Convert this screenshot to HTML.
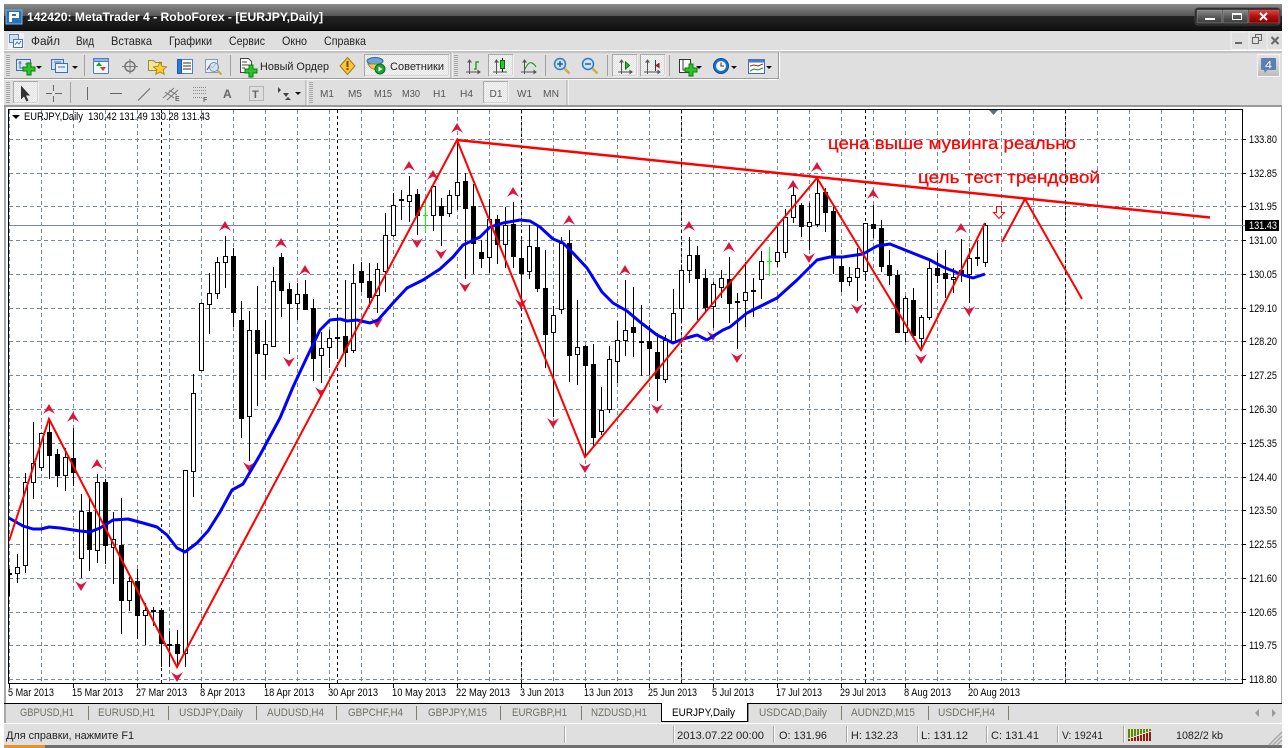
<!DOCTYPE html>
<html><head><meta charset="utf-8"><title>MetaTrader 4</title>
<style>html,body{margin:0;padding:0;background:#fff;overflow:hidden}svg{display:block}text{font-family:"Liberation Sans","Noto Sans CJK SC",sans-serif;white-space:pre}</style></head>
<body>
<svg xmlns="http://www.w3.org/2000/svg" width="1288" height="748" viewBox="0 0 1288 748" font-size="11">
<defs>
<linearGradient id="tb1" x1="0" y1="0" x2="0" y2="1"><stop offset="0" stop-color="#8c8c8c"/><stop offset="1" stop-color="#555"/></linearGradient>
<linearGradient id="tb2" x1="0" y1="0" x2="0" y2="1"><stop offset="0" stop-color="#242424"/><stop offset="1" stop-color="#111"/></linearGradient>
<linearGradient id="wb" x1="0" y1="0" x2="0" y2="1"><stop offset="0" stop-color="#8a8a8a"/><stop offset=".5" stop-color="#5c5c5c"/><stop offset="1" stop-color="#3a3a3a"/></linearGradient>
<linearGradient id="wr" x1="0" y1="0" x2="0" y2="1"><stop offset="0" stop-color="#d84a40"/><stop offset=".5" stop-color="#b01010"/><stop offset="1" stop-color="#800000"/></linearGradient>
<linearGradient id="b4" x1="0" y1="0" x2="0" y2="1"><stop offset="0" stop-color="#e4e4e4"/><stop offset="1" stop-color="#bdbdbd"/></linearGradient>
<pattern id="vg" x="9" y="110" width="32" height="7" patternUnits="userSpaceOnUse"><rect width="1" height="4" fill="#778899"/></pattern>
<pattern id="press" width="2" height="2" patternUnits="userSpaceOnUse"><rect width="2" height="2" fill="#e4e4e4"/><rect width="1" height="1" fill="#f4f4f4"/><rect x="1" y="1" width="1" height="1" fill="#f4f4f4"/></pattern>
<path id="u" d="M0-6L6 4 3 2 0 .5-3 2-6 4Z" fill="#dc143c"/>
<path id="d" d="M0 6L6-4 3-2 0-.5-3-2-6-4Z" fill="#dc143c"/>
<path id="plus" d="M-2-6h4v4h4v4h-4v4h-4v-4h-4v-4h4z" fill="#2cc42c" stroke="#0c7a0c" stroke-width="1"/>
<path id="ar" d="M0 0h6l-3 3z" fill="#111"/>
</defs>

<!-- window base -->
<rect x="4" y="4" width="1278" height="744" fill="#dfdfdf"/>
<rect x="4" y="4" width="1278" height="12" fill="url(#tb1)"/>
<rect x="4" y="16" width="1278" height="14" fill="url(#tb2)"/>
<rect x="4" y="30" width="1278" height="1" fill="#000"/>
<rect x="4" y="50" width="1278" height="1" fill="#fff"/>
<rect x="4" y="51.5" width="1278" height="1" fill="#a4a4a4"/>
<rect x="4" y="78" width="775" height="1" fill="#9a9a9a"/>
<rect x="4" y="79" width="775" height="1" fill="#fff"/>
<rect x="778" y="52" width="1" height="27" fill="#9a9a9a"/><rect x="779" y="52" width="1" height="27" fill="#fff"/>
<rect x="4" y="105" width="1278" height="2" fill="#9a9a9a"/>
<rect x="6" y="107" width="1276" height="596" fill="#fff"/>
<rect x="4" y="107" width="2" height="616" fill="#a8a8a8"/>
<rect x="1281" y="107" width="1" height="596" fill="#a8a8a8"/>
<rect x="4" y="703" width="1278" height="1" fill="#000"/>
<rect x="4" y="723" width="1278" height="1" fill="#fff"/>
<rect x="4" y="745" width="1278" height="3" fill="#6f6f6f"/>
<rect x="4" y="745" width="41" height="3" fill="#e8912a"/>

<!-- title -->
<rect x="6" y="10" width="16" height="14" fill="#2b73b8" stroke="#7fb4e0"/>
<path d="M9 12h10v6h-7v4h-3zM12 14v2h4v-2z" fill="#fff" fill-rule="evenodd"/>
<text x="27" y="21" font-size="12" font-weight="bold" fill="#fff" textLength="296" lengthAdjust="spacingAndGlyphs">142420: MetaTrader 4 - RoboForex - [EURJPY,Daily]</text>
<rect x="1195" y="8" width="85" height="17" rx="3" fill="#1a1a1a" stroke="#444"/>
<rect x="1197" y="10" width="25" height="13" fill="url(#wb)" stroke="#999" stroke-width=".6"/>
<rect x="1223" y="10" width="25" height="13" fill="url(#wb)" stroke="#999" stroke-width=".6"/>
<rect x="1249" y="10" width="30" height="13" fill="url(#wr)" stroke="#c66" stroke-width=".6"/>
<rect x="1205" y="18" width="10" height="2" fill="#fff"/>
<rect x="1232.5" y="13.5" width="9" height="6" fill="none" stroke="#fff"/><rect x="1232" y="13" width="10" height="2" fill="#fff"/>
<path d="M1260 13l7 7m0-7l-7 7" stroke="#fff" stroke-width="2"/>

<!-- menu -->
<rect x="8" y="33" width="16" height="16" fill="#eef3fb"/>
<rect x="9.5" y="34.5" width="9" height="8" fill="#cfe0f5" stroke="#5f86c4"/>
<rect x="13.5" y="39.5" width="9" height="8" fill="#f5f8fd" stroke="#4a76bc"/>
<path d="M15 45l2-3 2 2 2-3" fill="none" stroke="#4a76bc"/>
<g fill="#222" font-size="12">
<text x="31" y="45" textLength="29" lengthAdjust="spacingAndGlyphs">Файл</text>
<text x="76" y="45" textLength="18" lengthAdjust="spacingAndGlyphs">Вид</text>
<text x="111" y="45" textLength="41" lengthAdjust="spacingAndGlyphs">Вставка</text>
<text x="169" y="45" textLength="43" lengthAdjust="spacingAndGlyphs">Графики</text>
<text x="229" y="45" textLength="36" lengthAdjust="spacingAndGlyphs">Сервис</text>
<text x="282" y="45" textLength="25" lengthAdjust="spacingAndGlyphs">Окно</text>
<text x="324" y="45" textLength="42" lengthAdjust="spacingAndGlyphs">Справка</text>
</g>
<!-- mdi buttons -->
<path d="M1231 49V32h16M1249 49V32h16M1267 49V32h15" fill="none" stroke="#f2f2f2"/>
<path d="M1231 49.5h16M1249 49.5h16M1267 49.5h15" stroke="#f2f2f2"/>
<rect x="1235" y="42" width="7" height="2" fill="#666"/>
<path d="M1252.5 37.5h6v6h-6zM1255.5 37v-2.5h6v6h-3" fill="none" stroke="#666"/>
<path d="M1271.5 37l7 7m0-7l-7 7" stroke="#666" stroke-width="2"/>

<!-- toolbar 1 -->
<path d="M8 55V76M8 82V103M311 82V103M456 55V76" stroke="#a8a8a8" stroke-width="4" stroke-dasharray="1 1"/>
<path d="M84.5 55V76M230.5 55V76M545.5 55V76M607.5 55V76M669.5 55V76M70.5 82V103" stroke="#a0a0a0"/>
<path d="M451 52V78M306 80V105M567 80V105" stroke="#a0a0a0"/>
<path d="M452 52V78M307 80V105M568 80V105" stroke="#fff"/>
<!-- new chart -->
<rect x="16.5" y="59.5" width="14" height="11" fill="#d8e6f8" stroke="#3f6fb0"/>
<path d="M20 61v7h8M18.5 63h3M25 64h3" stroke="#3f6fb0" fill="none"/>
<use href="#plus" x="29" y="69"/>
<use href="#ar" x="36" y="66"/>
<!-- profiles -->
<rect x="51.5" y="59.5" width="12" height="10" fill="#cfe0f5" stroke="#3f6fb0"/>
<rect x="55.5" y="63.5" width="12" height="9" fill="#e7f0fb" stroke="#3f6fb0"/>
<path d="M54 62h7M58 67h7" stroke="#3f6fb0"/>
<use href="#ar" x="72" y="66"/>
<!-- market watch -->
<rect x="93.5" y="58.5" width="15" height="15" rx="1" fill="#f4f8ff" stroke="#4f7dbf"/><rect x="93.5" y="58.5" width="15" height="3" fill="#8fb4e4" stroke="#4f7dbf"/>
<path d="M99 62l3 4h-6z" fill="#1ea51e"/><path d="M103 71l-3-4h6z" fill="#d8402a"/>
<!-- crosshair -->
<circle cx="130" cy="66.5" r="5" fill="none" stroke="#777" stroke-width="1.5"/><path d="M130 59v15M122 66.5h16" stroke="#777"/>
<!-- folder star -->
<path d="M148.5 60.5h5l2 2h6v8h-13z" fill="#f5e69a" stroke="#9a8a3a"/>
<path d="M160 62l2 4.2 4.5.6-3.300 3 .9 4.500-4.100-2.300-4.100 2.300.9-4.500-3.300-3 4.500-.6z" fill="#f6cf3a" stroke="#b18a10"/>
<!-- navigator -->
<rect x="177.5" y="59.5" width="15" height="14" fill="#fff" stroke="#4f7dbf"/><rect x="177.5" y="59.5" width="4" height="14" fill="#2d79d6" stroke="#1f5aa8"/>
<path d="M183 63h8M183 66h8M183 69h8" stroke="#333"/>
<!-- magnifier -->
<rect x="205.5" y="59.5" width="12" height="13" fill="#eaf0f8" stroke="#8a98a8"/>
<path d="M207 70l3-5 3 3 3-5" stroke="#557" fill="none"/>
<circle cx="214" cy="67" r="4.5" fill="#cfe3f8" fill-opacity=".7" stroke="#6f8fb0"/><path d="M217.5 70.5l4 4" stroke="#c9a93a" stroke-width="2"/>
<!-- new order -->
<path d="M240.5 58.5h8l3 3v11h-11z" fill="#fff" stroke="#444"/>
<path d="M242 62h5M242 65h7M242 68h3" stroke="#444"/>
<use href="#plus" x="251" y="71"/>
<text x="260" y="70" fill="#222" textLength="69" lengthAdjust="spacingAndGlyphs">Новый Ордер</text>
<!-- warning -->
<path d="M347.5 57.5l7.5 8.500-7.5 8.500-7.5-8.500z" fill="#f7c73a" stroke="#a07a10"/><rect x="346.5" y="61" width="2" height="6" fill="#7a4a00"/><rect x="346.5" y="68" width="2" height="2" fill="#7a4a00"/>
<!-- experts -->
<rect x="364.5" y="54.5" width="84" height="21" fill="url(#press)" stroke="#a8a8a8"/>
<path d="M449 55v21H365" fill="none" stroke="#fff"/>
<ellipse cx="375" cy="61" rx="8" ry="3.5" fill="#6ba4d8" stroke="#2e689e"/>
<path d="M368 64c3 6 10 7 13 4v-4z" fill="#f0c95a" stroke="#a88420"/>
<circle cx="380" cy="69" r="5" fill="#1fa331" stroke="#0c6a18"/><path d="M378.5 66.5v5l4-2.500z" fill="#fff"/>
<text x="390" y="70" fill="#222" textLength="54" lengthAdjust="spacingAndGlyphs">Советники</text>
<!-- chart type -->
<path d="M469.5 60v14M466 72h14M469.5 60l-1.500 2h3zM480 72l-2-1.500v3z" stroke="#555" fill="none"/>
<path d="M474 69h2v-7h3" stroke="#189018" fill="none" stroke-width="1.3"/>
<rect x="488.5" y="54.5" width="24" height="21" fill="url(#press)" stroke="#a8a8a8"/>
<path d="M513 55v21H489" fill="none" stroke="#fff"/>
<path d="M496.5 60v14M493 72h14M496.5 60l-1.500 2h3z" stroke="#555" fill="none"/>
<path d="M502.5 58v14" stroke="#111"/><rect x="500.5" y="60.5" width="4" height="8" fill="#22d022" stroke="#0a6a0a"/>
<path d="M524.5 60v14M521 72h15M524.5 60l-1.500 2h3zM536 72l-2-1.500v3z" stroke="#555" fill="none"/>
<path d="M525 69c3-6 5-7 7-6s3 2 4 4" stroke="#189018" fill="none"/>
<!-- zoom -->
<circle cx="560" cy="64" r="5.5" fill="#cfe3f8" stroke="#2f78c0" stroke-width="1.5"/><path d="M557 64h6M560 61v6" stroke="#1c5ea8" stroke-width="1.5"/><path d="M564.5 68.5l5 5" stroke="#d2ae3c" stroke-width="2.5"/>
<circle cx="588" cy="64" r="5.5" fill="#cfe3f8" stroke="#2f78c0" stroke-width="1.5"/><path d="M585 64h6" stroke="#1c5ea8" stroke-width="1.5"/><path d="M592.5 68.5l5 5" stroke="#d2ae3c" stroke-width="2.5"/>
<!-- autoscroll / shift -->
<rect x="612.5" y="54.5" width="24" height="21" fill="url(#press)" stroke="#a8a8a8"/>
<path d="M637 55v21H613" fill="none" stroke="#fff"/>
<path d="M621.5 60v14M618 72h14M621.5 60l-1.500 2h3zM632 72l-2-1.500v3z" stroke="#555" fill="none"/><path d="M625.5 62v7l4-3.500z" fill="#22c022" stroke="#0a7a0a"/>
<rect x="640.5" y="54.5" width="24" height="21" fill="url(#press)" stroke="#a8a8a8"/>
<path d="M665 55v21H641" fill="none" stroke="#fff"/>
<path d="M647.5 60v14M644 72h16M647.5 60l-1.500 2h3zM660 72l-2-1.500v3z" stroke="#555" fill="none"/><path d="M655.5 60v11" stroke="#1a3a9a"/><path d="M659 63.5v4l-3-2z" fill="#c8301a" stroke="#8a1a0a"/>
<!-- indicators -->
<rect x="679.5" y="59.5" width="11" height="13" fill="#fff" stroke="#333"/><path d="M683 60v10h7" stroke="#333" fill="none"/>
<use href="#plus" x="691" y="70"/>
<use href="#ar" x="696" y="66"/>
<circle cx="721" cy="66" r="7.5" fill="#1a70c8" stroke="#0c4a8e"/><circle cx="721" cy="66" r="5" fill="#eef4fb"/><path d="M721 62.5V66h3" stroke="#333" fill="none"/>
<use href="#ar" x="731" y="66"/>
<rect x="748.5" y="59.5" width="16" height="14" fill="#fff" stroke="#3f6fb0"/><rect x="748.5" y="59.5" width="16" height="3" fill="#3f7ec8"/>
<path d="M750 66l4-1 4 1 5-2" stroke="#a02a10" fill="none"/><path d="M750 71l4-2 4 1 5-2" stroke="#189018" fill="none"/>
<use href="#ar" x="766" y="66"/>
<!-- 4 -->
<rect x="1257.5" y="54.5" width="22" height="22" fill="url(#b4)" stroke="#f4f4f4"/>
<path d="M1262 58h13a1 1 0 0 1 1 1v10a1 1 0 0 1-1 1h-8l-2 3-1-3h-2a1 1 0 0 1-1-1V59a1 1 0 0 1 1-1z" fill="#5b7fb5"/>
<text x="1265" y="68.5" font-size="11" fill="#fff" textLength="7" lengthAdjust="spacingAndGlyphs">4</text>

<!-- toolbar 2 -->
<rect x="13.5" y="81.5" width="24" height="21" fill="url(#press)" stroke="#a8a8a8"/>
<path d="M38 82v21H14" fill="none" stroke="#fff"/>
<path d="M21 85.5v14l3-3 2.500 5 2-1-2.500-5h4z" fill="#333"/>
<path d="M53.5 85v6M53.5 96v6M46 93.5h6M55 93.5h7" stroke="#666"/>
<path d="M87.5 87v13M110 93.5h12M138 100.5l12-12" stroke="#666" fill="none"/>
<path d="M163 98l11-10M167 100l11-10M165 92l9 6M169 90l8 5" stroke="#777" fill="none"/>
<text x="175" y="101" font-size="7" font-weight="bold" fill="#666">E</text>
<path d="M193 87.5h13M193 90.5h13M193 93.5h13M193 97.5h10" stroke="#888" stroke-dasharray="1 1"/>
<text x="203" y="102" font-size="7" font-weight="bold" fill="#666">F</text>
<text x="223" y="98" font-size="12" font-weight="bold" fill="#666">A</text>
<rect x="249.5" y="86.5" width="14" height="14" fill="none" stroke="#888" stroke-dasharray="1 1"/>
<text x="252" y="98" font-size="11" font-weight="bold" fill="#666">T</text>
<path d="M278 87l3 3-3 3zM283 93h6l-3 4zM288 97l3 3h-6z" fill="#444"/>
<use href="#ar" x="295" y="92"/>
<g fill="#555" font-size="10">
<text x="320" y="97" textLength="14" lengthAdjust="spacingAndGlyphs">M1</text>
<text x="348" y="97" textLength="14" lengthAdjust="spacingAndGlyphs">M5</text>
<text x="374" y="97" textLength="18" lengthAdjust="spacingAndGlyphs">M15</text>
<text x="402" y="97" textLength="18" lengthAdjust="spacingAndGlyphs">M30</text>
<text x="433" y="97" textLength="13" lengthAdjust="spacingAndGlyphs">H1</text>
<text x="460" y="97" textLength="13" lengthAdjust="spacingAndGlyphs">H4</text>
</g>
<rect x="483.5" y="81.5" width="24" height="21" fill="url(#press)" stroke="#a8a8a8"/>
<path d="M508 82v21H484" fill="none" stroke="#fff"/>
<g fill="#555" font-size="10">
<text x="489.5" y="97" textLength="13" lengthAdjust="spacingAndGlyphs">D1</text>
<text x="517" y="97" textLength="15" lengthAdjust="spacingAndGlyphs">W1</text>
<text x="543" y="97" textLength="16" lengthAdjust="spacingAndGlyphs">MN</text>
</g>

<!-- chart grid -->
<rect x="9" y="110" width="1233" height="573" fill="url(#vg)"/>
<path d="M9 139.5H1242M9 173.5H1242M9 206.5H1242M9 240.5H1242M9 274.5H1242M9 308.5H1242M9 341.5H1242M9 375.5H1242M9 409.5H1242M9 443.5H1242M9 477.5H1242M9 510.5H1242M9 544.5H1242M9 578.5H1242M9 612.5H1242M9 645.5H1242M9 679.5H1242" stroke="#778899" stroke-dasharray="4 3"/>
<path d="M161.5 110V683M337.5 110V683M521.5 110V683M681.5 110V683M865.5 110V683M1065.5 110V683" stroke="#000" stroke-dasharray="3 3"/>
<path d="M8 225.5H1242" stroke="#778899"/>

<!-- candle wicks -->
<path stroke="#000" fill="none" d="M9.5 569V596M17.5 554V583M25.5 473V573M33.5 422V499M41.5 433V471M49.5 419V479M57.5 449V487M65.5 448V491M73.5 428V486M81.5 494V578M89.5 497V571M97.5 474V563M105.5 479V564M113.5 512V584M121.5 498V634M129.5 577V611M137.5 569V639M145.5 603V645M153.5 607V626M161.5 610V667M169.5 631V667M177.5 630V667M185.5 470V667M193.5 374V497M201.5 303V370M209.5 273V334M217.5 257V299M225.5 236V288M233.5 248V327M241.5 301V438M249.5 311V461M257.5 286V406M265.5 320V380M273.5 267V347M281.5 253V317M289.5 283V354M297.5 283V320M305.5 280V309M313.5 299V381M321.5 332V383M329.5 330V368M337.5 317V357M345.5 280V367M353.5 264V353M361.5 262V292M369.5 263V307M377.5 263V313M385.5 213V292M393.5 193V237M401.5 190V220M409.5 176V222M417.5 189V235M433.5 186V231M441.5 198V246M449.5 190V217M457.5 140V210M465.5 173V279M473.5 184V274M481.5 240V268M489.5 199V273M497.5 215V264M505.5 207V268M513.5 202V268M521.5 240V307M529.5 225V279M537.5 227V292M545.5 250V368M553.5 306V417M561.5 237V314M569.5 230V382M577.5 300V385M585.5 345V457M593.5 344V448M601.5 387V435M609.5 346V413M617.5 321V383M625.5 280V356M633.5 287V357M641.5 305V376M649.5 325V375M657.5 333V401M665.5 335V383M673.5 289V343M681.5 265V320M689.5 237V283M697.5 246V320M705.5 269V313M713.5 282V328M721.5 270V298M729.5 257V323M737.5 293V349M745.5 262V327M753.5 278V317M761.5 251V299M777.5 227V267M785.5 209V258M793.5 185V223M801.5 203V237M809.5 203V250M817.5 180V227M825.5 188V232M833.5 207V274M841.5 257V292M849.5 267V286M857.5 248V301M865.5 223V280M873.5 205V238M881.5 220V272M889.5 250V285M897.5 270V332M905.5 296V342M913.5 288V337M921.5 315V348M929.5 260V320M937.5 253V283M945.5 250V298M953.5 268V293M961.5 239V282M969.5 248V303M977.5 241V266M985.5 223V267"/>
<path stroke="#00ff00" fill="none" d="M425.5 203V232M423 215.5h5M769.5 247V276M767 261.5h5"/>
<!-- white bodies -->
<path fill="#fff" stroke="#000" d="M15.5 567.5h4v6h-4zM23.5 482.5h4v83h-4zM31.5 463.5h4v19h-4zM39.5 433.5h4v34h-4zM63.5 457.5h4v18h-4zM79.5 511.5h4v47h-4zM95.5 482.5h4v68h-4zM111.5 539.5h4v8h-4zM127.5 581.5h4v19h-4zM143.5 610.5h4v5h-4zM183.5 470.5h4v183h-4zM191.5 393.5h4v78h-4zM199.5 303.5h4v67h-4zM207.5 293.5h4v11h-4zM215.5 262.5h4v31h-4zM223.5 256.5h4v6h-4zM247.5 330.5h4v86h-4zM263.5 344.5h4v10h-4zM271.5 281.5h4v65h-4zM295.5 294.5h4v9h-4zM319.5 348.5h4v7h-4zM327.5 338.5h4v9h-4zM351.5 283.5h4v67h-4zM375.5 269.5h4v26h-4zM383.5 235.5h4v36h-4zM391.5 205.5h4v30h-4zM407.5 195.5h4v6h-4zM431.5 186.5h4v29h-4zM447.5 195.5h4v18h-4zM455.5 182.5h4v13h-4zM487.5 219.5h4v38h-4zM503.5 225.5h4v19h-4zM527.5 246.5h4v25h-4zM551.5 315.5h4v17h-4zM559.5 243.5h4v66h-4zM575.5 347.5h4v7h-4zM599.5 410.5h4v21h-4zM607.5 359.5h4v50h-4zM615.5 340.5h4v21h-4zM623.5 330.5h4v10h-4zM663.5 340.5h4v39h-4zM671.5 313.5h4v28h-4zM679.5 270.5h4v38h-4zM687.5 255.5h4v15h-4zM711.5 284.5h4v22h-4zM719.5 278.5h4v9h-4zM743.5 292.5h4v8h-4zM759.5 261.5h4v18h-4zM775.5 252.5h4v9h-4zM783.5 217.5h4v35h-4zM791.5 195.5h4v22h-4zM807.5 222.5h4v4h-4zM815.5 193.5h4v31h-4zM847.5 277.5h4v4h-4zM855.5 268.5h4v9h-4zM863.5 223.5h4v48h-4zM903.5 298.5h4v34h-4zM919.5 317.5h4v21h-4zM927.5 268.5h4v49h-4zM951.5 277.5h4v2h-4zM967.5 258.5h4v16h-4zM983.5 225.5h4v37h-4z"/>
<!-- black bodies -->
<path fill="#000" stroke="#000" d="M9.5 573.5h2v1h-2zM47.5 432.5h4v23h-4zM55.5 454.5h4v21h-4zM71.5 458.5h4v14h-4zM87.5 512.5h4v37h-4zM103.5 482.5h4v63h-4zM119.5 545.5h4v55h-4zM135.5 581.5h4v34h-4zM151.5 610.5h4v1h-4zM159.5 610.5h4v33h-4zM167.5 644.5h4v1h-4zM175.5 644.5h4v9h-4zM231.5 256.5h4v56h-4zM239.5 320.5h4v98h-4zM255.5 330.5h4v23h-4zM279.5 257.5h4v33h-4zM287.5 289.5h4v14h-4zM303.5 294.5h4v15h-4zM311.5 308.5h4v50h-4zM335.5 337.5h4v1h-4zM343.5 336.5h4v16h-4zM359.5 271.5h4v11h-4zM367.5 281.5h4v16h-4zM399.5 199.5h4v1h-4zM415.5 194.5h4v21h-4zM439.5 206.5h4v9h-4zM463.5 181.5h4v27h-4zM471.5 206.5h4v37h-4zM479.5 252.5h4v6h-4zM495.5 219.5h4v25h-4zM511.5 224.5h4v32h-4zM519.5 258.5h4v15h-4zM535.5 247.5h4v41h-4zM543.5 288.5h4v46h-4zM567.5 243.5h4v112h-4zM583.5 346.5h4v19h-4zM591.5 364.5h4v73h-4zM631.5 327.5h4v5h-4zM639.5 341.5h4v1h-4zM647.5 341.5h4v7h-4zM655.5 352.5h4v26h-4zM695.5 255.5h4v23h-4zM703.5 278.5h4v29h-4zM727.5 279.5h4v24h-4zM735.5 301.5h4v1h-4zM751.5 290.5h4v1h-4zM799.5 205.5h4v21h-4zM823.5 192.5h4v20h-4zM831.5 211.5h4v45h-4zM839.5 266.5h4v15h-4zM871.5 224.5h4v4h-4zM879.5 228.5h4v38h-4zM887.5 265.5h4v10h-4zM895.5 275.5h4v57h-4zM911.5 300.5h4v35h-4zM935.5 268.5h4v7h-4zM943.5 273.5h4v5h-4zM959.5 270.5h4v4h-4zM975.5 257.5h4v1h-4z"/>

<!-- fractals -->
<use href="#u" x="49" y="410"/><use href="#u" x="73" y="418"/><use href="#u" x="97" y="465"/><use href="#u" x="225" y="227"/><use href="#u" x="281" y="244"/><use href="#u" x="305" y="271"/><use href="#u" x="409" y="167"/><use href="#u" x="433" y="176"/><use href="#u" x="457" y="129"/><use href="#u" x="513" y="193"/><use href="#u" x="569" y="221"/><use href="#u" x="625" y="271"/><use href="#u" x="689" y="227"/><use href="#u" x="729" y="248"/><use href="#u" x="793" y="186"/><use href="#u" x="817" y="168"/><use href="#u" x="873" y="195"/><use href="#u" x="961" y="229"/>
<use href="#d" x="81" y="585"/><use href="#d" x="177" y="676"/><use href="#d" x="249" y="466"/><use href="#d" x="289" y="361"/><use href="#d" x="321" y="391"/><use href="#d" x="377" y="322"/><use href="#d" x="417" y="242"/><use href="#d" x="441" y="253"/><use href="#d" x="465" y="286"/><use href="#d" x="521" y="303"/><use href="#d" x="553" y="422"/><use href="#d" x="585" y="467"/><use href="#d" x="657" y="408"/><use href="#d" x="713" y="335"/><use href="#d" x="737" y="357"/><use href="#d" x="809" y="257"/><use href="#d" x="857" y="308"/><use href="#d" x="921" y="358"/><use href="#d" x="969" y="310"/>

<!-- MA -->
<polyline fill="none" stroke="#0000ff" stroke-width="3" stroke-linejoin="round" points="9,518 23,526 33,529 41,529 49,527 60,528 80,531 90,532 100,528 113,520 128,519 143,523 157,527 167,535 177,548 185,552 197,543 208,531 220,512 232,490 243,484 260,455 280,418 293,387 307,357 320,330 330,320 340,319 347,321 357,320 370,323 378,320 393,303 407,288 423,280 440,269 453,257 463,245 480,237 490,227 503,223 520,220 530,221 540,227 553,239 563,243 573,253 587,268 602,292 613,303 627,311 640,322 657,335 673,343 683,339 697,335 707,340 723,330 730,327 747,313 763,305 777,298 797,280 817,260 830,257 843,257 863,254 877,246 890,244 910,252 930,260 943,267 963,275 973,278 985,274"/>
<!-- zigzag & lines -->
<polyline fill="none" stroke="#ff0000" stroke-width="2" stroke-linejoin="miter" points="9,541 49,419 177,667 457,140 585,457 817,178 921,350 985,223"/>
<path d="M457 140L1210 217.5" stroke="#ff0000" stroke-width="2.5" fill="none"/>
<polyline fill="none" stroke="#ff0000" stroke-width="2" points="1002,242 1025,199 1082,299"/>
<path d="M996.5 206.5h5v6h3l-5.500 6-5.500-6h3z" fill="#fff" stroke="#ff0000"/>
<text x="828" y="149" font-size="17" fill="#ff0000" stroke="#ff0000" stroke-width=".25" textLength="248" lengthAdjust="spacingAndGlyphs">цена выше мувинга реально</text>
<text x="918" y="183" font-size="17" fill="#ff0000" stroke="#ff0000" stroke-width=".25" textLength="182" lengthAdjust="spacingAndGlyphs">цель тест трендовой</text>

<!-- frame -->
<path d="M8.5 109.5H1242.5V683.5H8.5Z" fill="none" stroke="#000"/>
<path d="M989 110h9l-4.500 5z" fill="#5f6f80"/>
<path d="M12 115h8l-4 4z" fill="#000"/>
<text x="24" y="120" font-size="11" fill="#000" textLength="186" lengthAdjust="spacingAndGlyphs">EURJPY,Daily  130.42 131.49 130.28 131.43</text>

<!-- price axis -->
<path stroke="#000" d="M1242 139.5h4M1242 173.5h4M1242 206.5h4M1242 240.5h4M1242 274.5h4M1242 308.5h4M1242 341.5h4M1242 375.5h4M1242 409.5h4M1242 443.5h4M1242 477.5h4M1242 510.5h4M1242 544.5h4M1242 578.5h4M1242 612.5h4M1242 645.5h4M1242 679.5h4"/>
<g fill="#000" font-size="11">
<text x="1249" y="143" textLength="28" lengthAdjust="spacingAndGlyphs">133.80</text>
<text x="1249" y="177" textLength="28" lengthAdjust="spacingAndGlyphs">132.85</text>
<text x="1249" y="210" textLength="28" lengthAdjust="spacingAndGlyphs">131.95</text>
<text x="1249" y="244" textLength="28" lengthAdjust="spacingAndGlyphs">131.00</text>
<text x="1249" y="278" textLength="28" lengthAdjust="spacingAndGlyphs">130.05</text>
<text x="1249" y="312" textLength="28" lengthAdjust="spacingAndGlyphs">129.10</text>
<text x="1249" y="345" textLength="28" lengthAdjust="spacingAndGlyphs">128.20</text>
<text x="1249" y="379" textLength="28" lengthAdjust="spacingAndGlyphs">127.25</text>
<text x="1249" y="413" textLength="28" lengthAdjust="spacingAndGlyphs">126.30</text>
<text x="1249" y="447" textLength="28" lengthAdjust="spacingAndGlyphs">125.35</text>
<text x="1249" y="481" textLength="28" lengthAdjust="spacingAndGlyphs">124.40</text>
<text x="1249" y="514" textLength="28" lengthAdjust="spacingAndGlyphs">123.50</text>
<text x="1249" y="548" textLength="28" lengthAdjust="spacingAndGlyphs">122.55</text>
<text x="1249" y="582" textLength="28" lengthAdjust="spacingAndGlyphs">121.60</text>
<text x="1249" y="616" textLength="28" lengthAdjust="spacingAndGlyphs">120.65</text>
<text x="1249" y="649" textLength="28" lengthAdjust="spacingAndGlyphs">119.75</text>
<text x="1249" y="683" textLength="28" lengthAdjust="spacingAndGlyphs">118.80</text>
</g>
<rect x="1245" y="220" width="34" height="11" fill="#000"/>
<path d="M1242 225.5h3" stroke="#778899"/>
<text x="1249" y="229" font-size="11" fill="#fff" textLength="28" lengthAdjust="spacingAndGlyphs">131.43</text>

<!-- date axis -->
<path stroke="#000" d="M9.5 683v5M73.5 683v5M137.5 683v5M201.5 683v5M265.5 683v5M329.5 683v5M393.5 683v5M457.5 683v5M521.5 683v5M585.5 683v5M649.5 683v5M713.5 683v5M777.5 683v5M841.5 683v5M905.5 683v5M969.5 683v5"/>
<g fill="#000" font-size="11">
<text x="8" y="696" textLength="46" lengthAdjust="spacingAndGlyphs">5 Mar 2013</text>
<text x="72" y="696" textLength="51" lengthAdjust="spacingAndGlyphs">15 Mar 2013</text>
<text x="136" y="696" textLength="51" lengthAdjust="spacingAndGlyphs">27 Mar 2013</text>
<text x="200" y="696" textLength="45" lengthAdjust="spacingAndGlyphs">8 Apr 2013</text>
<text x="264" y="696" textLength="50" lengthAdjust="spacingAndGlyphs">18 Apr 2013</text>
<text x="328" y="696" textLength="50" lengthAdjust="spacingAndGlyphs">30 Apr 2013</text>
<text x="392" y="696" textLength="54" lengthAdjust="spacingAndGlyphs">10 May 2013</text>
<text x="456" y="696" textLength="54" lengthAdjust="spacingAndGlyphs">22 May 2013</text>
<text x="520" y="696" textLength="44" lengthAdjust="spacingAndGlyphs">3 Jun 2013</text>
<text x="584" y="696" textLength="49" lengthAdjust="spacingAndGlyphs">13 Jun 2013</text>
<text x="648" y="696" textLength="49" lengthAdjust="spacingAndGlyphs">25 Jun 2013</text>
<text x="712" y="696" textLength="42" lengthAdjust="spacingAndGlyphs">5 Jul 2013</text>
<text x="776" y="696" textLength="46" lengthAdjust="spacingAndGlyphs">17 Jul 2013</text>
<text x="840" y="696" textLength="46" lengthAdjust="spacingAndGlyphs">29 Jul 2013</text>
<text x="904" y="696" textLength="47" lengthAdjust="spacingAndGlyphs">8 Aug 2013</text>
<text x="968" y="696" textLength="52" lengthAdjust="spacingAndGlyphs">20 Aug 2013</text>
</g>

<!-- tabs -->
<path d="M88.5 706v14M168.5 706v14M256.5 706v14M336.5 706v14M416.5 706v14M500.5 706v14M581.5 706v14M841.5 706v14M928.5 706v14M1008.5 706v14" stroke="#7f7e70"/>
<g fill="#6f6f67" font-size="11">
<text x="20" y="716" textLength="54" lengthAdjust="spacingAndGlyphs">GBPUSD,H1</text>
<text x="98" y="716" textLength="57" lengthAdjust="spacingAndGlyphs">EURUSD,H1</text>
<text x="179" y="716" textLength="64" lengthAdjust="spacingAndGlyphs">USDJPY,Daily</text>
<text x="267" y="716" textLength="57" lengthAdjust="spacingAndGlyphs">AUDUSD,H4</text>
<text x="348" y="716" textLength="55" lengthAdjust="spacingAndGlyphs">GBPCHF,H4</text>
<text x="428" y="716" textLength="59" lengthAdjust="spacingAndGlyphs">GBPJPY,M15</text>
<text x="512" y="716" textLength="55" lengthAdjust="spacingAndGlyphs">EURGBP,H1</text>
<text x="591" y="716" textLength="56" lengthAdjust="spacingAndGlyphs">NZDUSD,H1</text>
<text x="759" y="716" textLength="68" lengthAdjust="spacingAndGlyphs">USDCAD,Daily</text>
<text x="851" y="716" textLength="64" lengthAdjust="spacingAndGlyphs">AUDNZD,M15</text>
<text x="938" y="716" textLength="57" lengthAdjust="spacingAndGlyphs">USDCHF,H4</text>
</g>
<rect x="661" y="702" width="87" height="20" fill="#fff"/>
<path d="M661.5 703v18.500h86V703" fill="none" stroke="#000"/>
<path d="M748.5 704v18" stroke="#8a8a8a"/>
<text x="672" y="716" fill="#000" font-size="11" textLength="63" lengthAdjust="spacingAndGlyphs">EURJPY,Daily</text>
<path d="M1259 709v8l-4-4zM1272 709v8l4-4z" fill="#9a9a9a"/>

<!-- status -->
<path d="M564.5 726v17M673.5 726v17M773.5 726v17M846.5 726v17M917.5 726v17M986.5 726v17M1057.5 726v17M1123.5 726v17" stroke="#a8a8a8"/>
<path d="M565.5 726v17M674.5 726v17M774.5 726v17M847.5 726v17M918.5 726v17M987.5 726v17M1058.5 726v17M1124.5 726v17" stroke="#fff"/>
<g fill="#222" font-size="11">
<text x="6" y="739" textLength="128" lengthAdjust="spacingAndGlyphs">Для справки, нажмите F1</text>
<text x="677" y="739" textLength="87" lengthAdjust="spacingAndGlyphs">2013.07.22 00:00</text>
<text x="779" y="739" textLength="48" lengthAdjust="spacingAndGlyphs">O: 131.96</text>
<text x="851" y="739" textLength="47" lengthAdjust="spacingAndGlyphs">H: 132.23</text>
<text x="921" y="739" textLength="47" lengthAdjust="spacingAndGlyphs">L: 131.12</text>
<text x="991" y="739" textLength="48" lengthAdjust="spacingAndGlyphs">C: 131.41</text>
<text x="1062" y="739" textLength="41" lengthAdjust="spacingAndGlyphs">V: 19241</text>
<text x="1176" y="739" textLength="47" lengthAdjust="spacingAndGlyphs">1082/2 kb</text>
</g>
<path d="M1129 729v9M1132 729v8M1135 729v7M1138 729v6M1141 729v5M1144 729v4M1147 729v3M1150 729v2" stroke="#5f8a00" stroke-width="2"/>
<path d="M1129 739v2M1132 738v3M1135 737v4M1138 736v5M1141 735v6M1144 734v7M1147 733v8M1150 732v9" stroke="#9c1a0a" stroke-width="2"/>
<path d="M1269 745l13-13M1273 745l9-9M1277 745l5-5" stroke="#a8a8a8" stroke-width="1.5"/>
</svg>
</body></html>
